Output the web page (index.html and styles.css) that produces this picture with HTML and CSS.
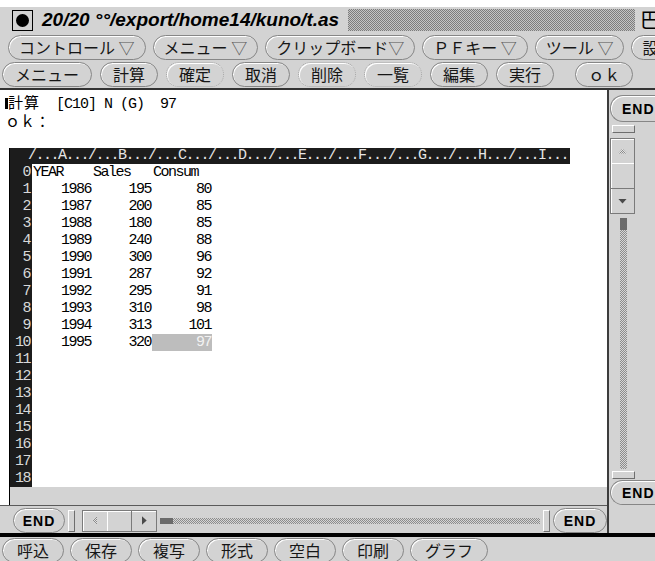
FILE: index.html
```html
<!DOCTYPE html>
<html lang="ja">
<head>
<meta charset="utf-8">
<title>t.as</title>
<link rel="stylesheet" href="styles.css">
</head>
<body>
<div class="win">
  <header class="titlebar">
    <span class="pin"><span class="pin-dot"></span></span>
    <span class="title">20/20 °°/export/home14/kuno/t.as</span>
    <span class="title-fill"></span>
    <span class="title-glyph">巴</span>
  </header>

  <nav class="menubar">
    <span class="btn">コントロール <span class="drop">▽</span></span>
    <span class="btn">メニュー <span class="drop">▽</span></span>
    <span class="btn">クリップボード<span class="drop">▽</span></span>
    <span class="btn">ＰＦキー <span class="drop">▽</span></span>
    <span class="btn">ツール <span class="drop">▽</span></span>
    <span class="btn">設定 <span class="drop">▽</span></span>
  </nav>

  <nav class="cmdbar">
    <span class="btn">メニュー</span>
    <span class="btn">計算</span>
    <span class="btn btn-off">確定</span>
    <span class="btn">取消</span>
    <span class="btn btn-off">削除</span>
    <span class="btn btn-off">一覧</span>
    <span class="btn">編集</span>
    <span class="btn">実行</span>
    <span class="btn btn-ok">ｏｋ</span>
  </nav>

  <div class="work">
    <div class="pane">
      <section class="sheet">
        <div class="status"><span class="caret"></span><span class="kanji">計算</span>  [C10] N (G)  97</div>
        <div class="prompt">ｏｋ：</div>
        <div class="grid">
          <div class="colhead">/...A.../...B.../...C.../...D.../...E.../...F.../...G.../...H.../...I...</div>
          <div class="row"><span class="rn">0</span><span class="lbl">YEAR</span><span class="lbl">Sales</span><span class="lbl">Consum</span></div>
          <div class="row"><span class="rn">1</span><span class="num">1986</span><span class="num">195</span><span class="num">80</span></div>
          <div class="row"><span class="rn">2</span><span class="num">1987</span><span class="num">200</span><span class="num">85</span></div>
          <div class="row"><span class="rn">3</span><span class="num">1988</span><span class="num">180</span><span class="num">85</span></div>
          <div class="row"><span class="rn">4</span><span class="num">1989</span><span class="num">240</span><span class="num">88</span></div>
          <div class="row"><span class="rn">5</span><span class="num">1990</span><span class="num">300</span><span class="num">96</span></div>
          <div class="row"><span class="rn">6</span><span class="num">1991</span><span class="num">287</span><span class="num">92</span></div>
          <div class="row"><span class="rn">7</span><span class="num">1992</span><span class="num">295</span><span class="num">91</span></div>
          <div class="row"><span class="rn">8</span><span class="num">1993</span><span class="num">310</span><span class="num">98</span></div>
          <div class="row"><span class="rn">9</span><span class="num">1994</span><span class="num">313</span><span class="num">101</span></div>
          <div class="row"><span class="rn">10</span><span class="num">1995</span><span class="num">320</span><span class="num sel">97</span></div>
          <div class="row"><span class="rn">11</span></div>
          <div class="row"><span class="rn">12</span></div>
          <div class="row"><span class="rn">13</span></div>
          <div class="row"><span class="rn">14</span></div>
          <div class="row"><span class="rn">15</span></div>
          <div class="row"><span class="rn">16</span></div>
          <div class="row"><span class="rn">17</span></div>
          <div class="row"><span class="rn">18</span></div>
          <div class="gutter"></div>
        </div>
      </section>

      <div class="hscroll">
        <span class="end hend hend-l">END</span>
        <span class="anchor anchor-h"></span>
        <span class="elev elev-h">
          <span class="seg"><i class="tri tri-left dim"></i></span>
          <span class="seg seg-mid"></span>
          <span class="seg"><i class="tri tri-right"></i></span>
        </span>
        <span class="thumb-h"></span>
        <span class="trough-h"></span>
        <span class="anchor anchor-h"></span>
        <span class="end hend hend-r">END</span>
      </div>
    </div>

    <aside class="vscroll">
      <span class="end vend">END</span>
      <span class="anchor anchor-v"></span>
      <span class="elev elev-v">
        <span class="seg"><i class="tri tri-up dim"></i></span>
        <span class="seg seg-mid"></span>
        <span class="seg"><i class="tri tri-down"></i></span>
      </span>
      <span class="thumb-v"></span>
      <span class="trough-v"></span>
      <span class="anchor anchor-v anchor-v-end"></span>
      <span class="end vend vend-bottom">END</span>
    </aside>
  </div>

  <footer class="filebar">
    <span class="btn">呼込</span>
    <span class="btn">保存</span>
    <span class="btn">複写</span>
    <span class="btn">形式</span>
    <span class="btn">空白</span>
    <span class="btn">印刷</span>
    <span class="btn">グラフ</span>
  </footer>
</div>
</body>
</html>
```

FILE: styles.css
```css
* { box-sizing: border-box; margin: 0; padding: 0; }

html, body {
  width: 655px;
  height: 561px;
  overflow: hidden;
  background: #fff;
}

body {
  font-family: "Noto Sans CJK JP", "Liberation Sans", sans-serif;
  color: #000;
}

.win {
  margin-top: 7px;
  height: 554px;
  background: #d3d3d3;
  display: flex;
  flex-direction: column;
  overflow: hidden;
}

/* ---- title bar ---- */
.titlebar {
  flex: none;
  height: 26px;
  display: flex;
  align-items: center;
  gap: 9px;
  padding-left: 12px;
}
.pin {
  flex: none;
  width: 21px;
  height: 21px;
  border: 1px solid #000;
  display: flex;
  align-items: center;
  justify-content: center;
}
.pin-dot {
  width: 13px;
  height: 13px;
  border-radius: 50%;
  background: #000;
}
.title {
  flex: none;
  font-family: "Liberation Sans", sans-serif;
  font-weight: bold;
  font-style: italic;
  font-size: 19px;
  white-space: nowrap;
}
.title-fill {
  flex: 1;
  height: 22px;
  background: repeating-conic-gradient(#7c7c7c 0 25%, #c4c4c4 0 50%) 0 0 / 2px 2px;
}
.title-glyph {
  flex: none;
  width: 15px;
  margin-left: -4px;
  font-size: 20px;
  line-height: 22px;
  white-space: nowrap;
  overflow: hidden;
}

/* ---- pill buttons ---- */
.btn {
  flex: none;
  height: 25px;
  line-height: 23px;
  padding: 0 10px;
  border: 1px solid #868686;
  border-radius: 13px;
  box-shadow: inset 1px 1px 0 #fff;
  background: #d3d3d3;
  color: #161616;
  font-size: 16px;
  white-space: nowrap;
}
.btn-off {
  border-color: #a9a9a9;
  border-style: dotted;
}
.drop { color: #555; }

.menubar {
  flex: none;
  height: 28px;
  display: flex;
  align-items: center;
  gap: 7px;
  padding-left: 8px;
}

.cmdbar {
  flex: none;
  height: 29px;
  display: flex;
  align-items: center;
  gap: 8px;
  padding-left: 2px;
  border-bottom: 2px solid #333;
}
.cmdbar .btn { padding: 0 12px; }
.cmdbar .btn-ok { margin-left: 13px; }

/* ---- work area ---- */
.work {
  flex: none;
  height: 443px;
  display: flex;
}
.pane {
  flex: none;
  width: 607px;
  display: flex;
  flex-direction: column;
}

.sheet {
  flex: none;
  height: 415px;
  padding-top: 2px;
  background: #fff;
  font-family: "Liberation Mono", monospace;
}
.status {
  height: 19px;
  line-height: 19px;
  padding-left: 5px;
  font-size: 15px;
  letter-spacing: -1px;
  white-space: pre;
}
.caret {
  display: inline-block;
  width: 3px;
  height: 11px;
  background: #000;
  vertical-align: -1px;
}
.kanji {
  font-family: "Noto Sans CJK JP", sans-serif;
  font-size: 15px;
  letter-spacing: 1px;
}
.prompt {
  height: 19px;
  line-height: 19px;
  padding-left: 5px;
  font-family: "Noto Sans CJK JP", sans-serif;
  font-size: 15px;
}

.grid {
  margin-top: 18px;
  margin-left: 9px;
  border-left: 1px solid #000;
  font-size: 15px;
  letter-spacing: -1.5px;
}
.colhead {
  width: 560px;
  height: 16px;
  line-height: 16px;
  padding-left: 18px;
  background: #1c1c1c;
  color: #e6e6e6;
  white-space: pre;
}
.row {
  display: grid;
  grid-template-columns: 22px 60px 60px 60px;
  height: 17px;
  line-height: 17px;
  white-space: nowrap;
}
.rn {
  background: #1c1c1c;
  color: #d8d8d8;
  text-align: right;
  padding-right: 2px;
}
.lbl { padding-left: 1px; }
.num {
  text-align: right;
  padding-right: 1px;
}
.sel {
  background: #bdbdbd;
  color: #f2f2f2;
}
.gutter {
  height: 18px;
  background: #d3d3d3;
}

/* ---- scrollbar parts ---- */
.end {
  flex: none;
  display: flex;
  align-items: center;
  font-family: "Liberation Sans", sans-serif;
  font-weight: bold;
  font-size: 14px;
  letter-spacing: 1px;
  border: 1px solid #868686;
  box-shadow: inset 1px 1px 0 #fff;
}
.anchor {
  flex: none;
  border: 1px solid;
  border-color: #fff #6e6e6e #6e6e6e #fff;
}
.elev {
  flex: none;
  display: flex;
  border: 1px solid #7a7a7a;
  box-shadow: inset 1px 1px 0 #fff;
}
.seg {
  flex: 1;
  display: flex;
  align-items: center;
  justify-content: center;
}
.tri {
  display: block;
  background: #4a4a4a;
}
.tri.dim {
  background: repeating-conic-gradient(#8a8a8a 0 25%, #e2e2e2 0 50%) 0 0 / 2px 2px;
}
.tri-up    { width: 9px; height: 5px; clip-path: polygon(50% 0, 100% 100%, 0 100%); }
.tri-down  { width: 9px; height: 5px; clip-path: polygon(0 0, 100% 0, 50% 100%); }
.tri-left  { width: 5px; height: 9px; clip-path: polygon(100% 0, 100% 100%, 0 50%); }
.tri-right { width: 5px; height: 9px; clip-path: polygon(0 0, 100% 50%, 0 100%); }

.trough-h,
.trough-v {
  background: repeating-conic-gradient(#8c8c8c 0 25%, #d6d6d6 0 50%) 0 0 / 2px 2px;
}

/* horizontal bar */
.hscroll {
  flex: none;
  height: 28px;
  padding-top: 2px;
  border-top: 1px solid #5a5a5a;
  display: flex;
  align-items: center;
}
.hend {
  height: 25px;
  border-radius: 13px;
  justify-content: center;
}
.hend-l { width: 52px; margin-left: 13px; }
.hend-r { width: 54px; margin-left: 3px; }
.anchor-h { width: 7px; height: 22px; margin-left: 3px; }
.elev-h { width: 75px; height: 22px; margin-left: 7px; }
.elev-h .seg-mid {
  border-left: 1px solid #fff;
  border-right: 1px solid #7a7a7a;
}
.thumb-h {
  flex: none;
  width: 13px;
  height: 6px;
  margin-left: 3px;
  background: #6b6b6b;
}
.trough-h {
  flex: 1;
  height: 6px;
}

/* vertical bar */
.vscroll {
  flex: 1;
  display: flex;
  flex-direction: column;
  align-items: flex-start;
  padding: 0 0 28px 1px;
  border-left: 2px solid #3c3c3c;
}
.vend {
  width: 52px;
  height: 27px;
  margin-top: 5px;
  padding-left: 11px;
  border-right: none;
  border-radius: 13px 0 0 13px;
}
.vend-bottom {
  height: 25px;
  margin-top: 1px;
}
.anchor-v { width: 23px; height: 8px; margin: 3px 0 0 2px; }
.anchor-v-end { margin-top: 2px; }
.elev-v {
  flex-direction: column;
  width: 25px;
  height: 76px;
  margin-top: 5px;
}
.elev-v .seg-mid {
  border-top: 1px solid #fff;
  border-bottom: 1px solid #7a7a7a;
}
.thumb-v {
  flex: none;
  width: 7px;
  height: 12px;
  margin: 4px 0 0 10px;
  background: #6b6b6b;
}
.trough-v {
  flex: 1;
  width: 7px;
  margin-left: 10px;
}

/* ---- bottom command row ---- */
.filebar {
  flex: none;
  height: 28px;
  padding: 1px 0 0 2px;
  border-top: 4px solid #000;
  display: flex;
  align-items: flex-start;
  gap: 6px;
}
.filebar .btn { padding: 0 14px; }
```
